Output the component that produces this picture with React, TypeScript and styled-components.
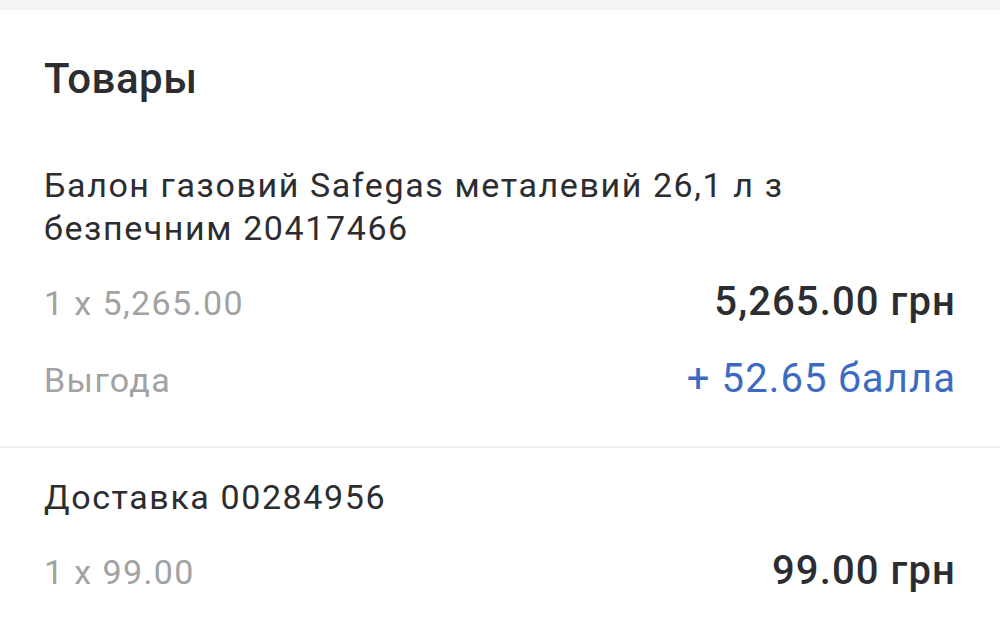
import React from 'react';
import styled, { createGlobalStyle } from 'styled-components';

const GlobalStyle = createGlobalStyle`
  html, body {
    margin: 0;
    padding: 0;
    background: #ffffff;
  }
  body {
    font-family: Roboto, "Noto Sans", "Liberation Sans", sans-serif;
    -webkit-font-smoothing: antialiased;
  }
`;

const TopStrip = styled.div`
  height: 10px;
  background: #f4f4f4;
`;

const Card = styled.section`
  background: #ffffff;
  padding-top: 44px;
`;

const Title = styled.h2`
  margin: 0;
  padding: 0 45px 0 44px;
  font-size: 42px;
  line-height: 50px;
  font-weight: 500;
  letter-spacing: 0.5px;
  color: #2c2d31;
`;

const Item = styled.div<{ $first?: boolean }>`
  padding: ${p => (p.$first ? '60px' : '28px')} 44px 0 44px;
  display: flex;
  flex-direction: column;
  gap: 28px;
`;

const Name = styled.div`
  font-size: 34px;
  line-height: 43px;
  letter-spacing: 1.6px;
  color: #2c2d31;
`;

const Row = styled.div`
  display: flex;
  justify-content: space-between;
  align-items: baseline;
  line-height: 48px;
`;

const Muted = styled.span`
  font-size: 34px;
  letter-spacing: 1.4px;
  color: #a2a2a2;
`;

const Price = styled.span<{ $accent?: boolean }>`
  font-size: 40px;
  letter-spacing: 1.1px;
  font-weight: ${p => (p.$accent ? 400 : 500)};
  color: ${p => (p.$accent ? '#3b6cc1' : '#2c2d31')};
`;

const Divider = styled.hr`
  margin: 42px 0 0;
  border: 0;
  height: 2px;
  background: #f1f1f1;
`;

const Rows = styled.div`
  display: flex;
  flex-direction: column;
  gap: 28px;
`;

export default function App() {
  return (
    <>
      <GlobalStyle />
      <TopStrip />
      <Card>
        <Title>Товары</Title>
        <Item $first>
          <Name>Балон газовий Safegas металевий 26,1 л з безпечним 20417466</Name>
          <Rows>
            <Row>
              <Muted>1 x 5,265.00</Muted>
              <Price>5,265.00 грн</Price>
            </Row>
            <Row>
              <Muted>Выгода</Muted>
              <Price $accent>+ 52.65 балла</Price>
            </Row>
          </Rows>
        </Item>
        <Divider />
        <Item>
          <Name>Доставка 00284956</Name>
          <Row>
            <Muted>1 x 99.00</Muted>
            <Price>99.00 грн</Price>
          </Row>
        </Item>
      </Card>
    </>
  );
}
